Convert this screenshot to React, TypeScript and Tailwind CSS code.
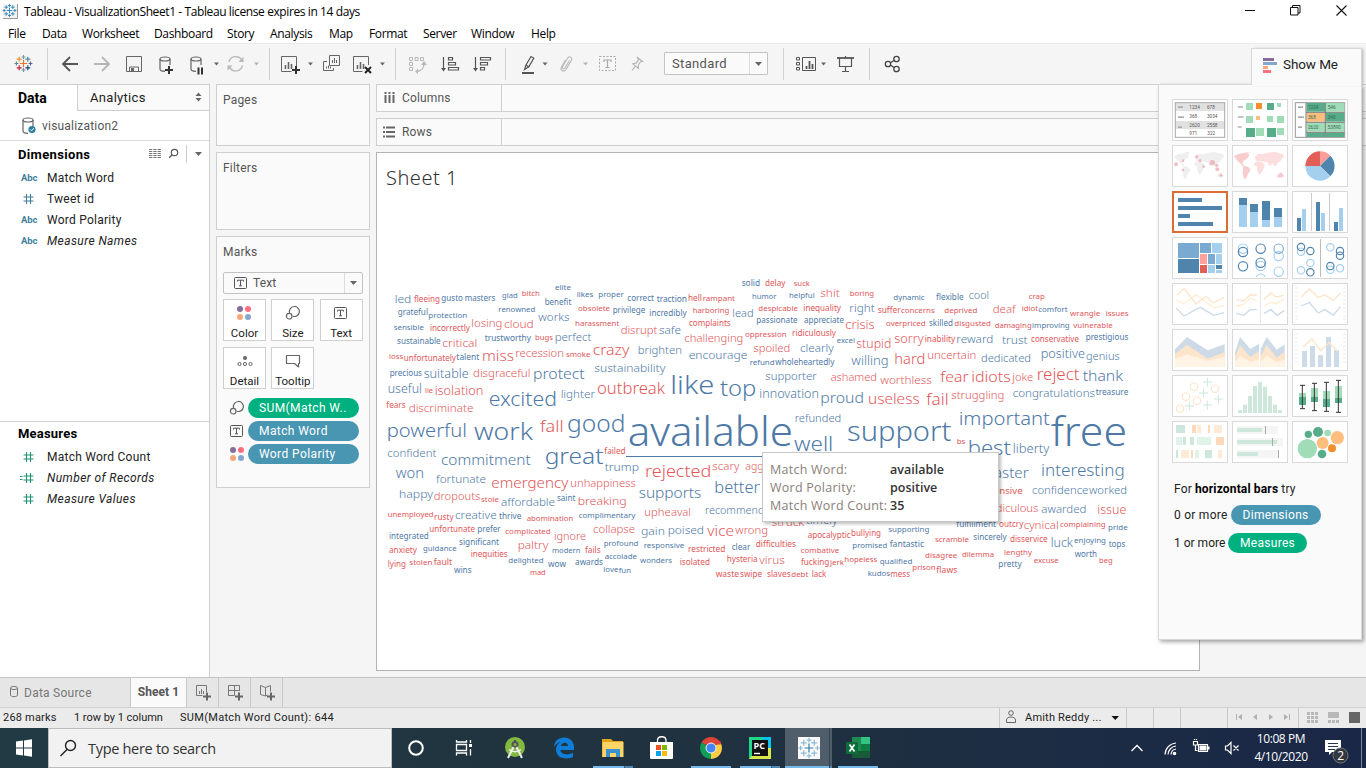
import React from "react";

type Box = { x: number; y: number; w: number; h: number; children?: React.ReactNode };

/* Drawing whose user units are window pixels, cut to the box x/y/w/h. */
const Art = ({ x, y, w, h, children }: Box) => (
  <svg width={w} height={h} viewBox={`${x} ${y} ${w} ${h}`} className="block shrink-0" fill="none">
    {children}
  </svg>
);

/* ---------- word cloud ---------- */

/* Each entry: sign+word, left, baseline, right. "-" is negative polarity. */
const LEFT = `+led 44 99 94|-fleeing 102 95 180|+gusto 184 93 249|+masters 254 92 346|+glad 366 84 413|-bitch 425 78 480|+elite 525 59 573|+likes 590 80 640|+proper 655 80 731|+correct 742 93 822|+traction 830 95 921
+grateful 53 135 144|+protection 145 143 262|+renowned 355 125 466|+benefit 494 104 574|-obsolete 594 122 690|+privilege 698 129 796|+works 475 153 568|-harassment 585 167 718|-disrupt 722 192 832
+sensible 41 179 132|-incorrectly 150 182 270|-losing 274 171 367|-cloud 372 173 461|+sustainable 51 221 182|-critical 187 231 292|+trustworthy 314 213 453|-bugs 465 211 519|+perfect 524 213 634|-crazy 638 256 748|+brighten 773 251 906
-loss 27 267 70|-unfortunately 71 273 228|+talent 229 270 298|-miss 306 272 402|-recession 406 262 552|-smoke 558 261 631|+precious 29 317 126|+suitable 131 325 266|-disgraceful 279 322 451|+protect 459 327 614|+sustainability 643 306 856
+useful 23 370 126|-lie 135 369 159|-isolation 164 376 310|+excited 328 408 528|+lighter 542 385 645|-outbreak 651 371 855|-fears 19 413 77|-discriminate 86 425 280|+powerful 22 501 258|+work 284 510 456|-fall 480 487 551|+good 563 485 733|+available 745 528 1236
+confident 22 562 169|+commitment 183 586 452|+great 496 583 668|-failed 673 551 737|+trump 674 604 777|+won 47 625 132|+fortunate 168 640 318|-emergency 334 653 565|-unhappiness 571 651 767
+happy 57 685 159|-dropouts 161 690 301|-stole 303 695 357|+affordable 363 707 525|+saint 531 694 586|-breaking 593 706 740|-unemployed 23 741 161|-rusty 162 749 221|+creative 225 746 350|+thrive 357 746 424|-abomination 440 752 580|+complimentary 596 743 766
-unfortunate 148 785 285|+prefer 292 785 362|-complicated 376 792 512|-ignore 522 809 618|-collapse 639 789 765|+integrated 27 806 146|+significant 237 825 357|-paltry 413 837 505|+profound 671 827 775|-anxiety 27 849 111|+guidance 129 843 230|-inequities 272 861 383|+modern 516 849 601|-fails 615 849 662
-lying 23 892 78|-stolen 88 885 157|-fault 161 885 216|+delighted 385 879 491|+wow 504 891 558|+awards 585 885 669|+accolade 674 867 771|+wins 222 909 275|-mad 450 915 497|+love 670 906 715|+fun 716 909 753`;

const MIDDLE = `+solid 335 47 390|-delay 405 47 466|-suck 491 47 540|+humor 366 87 439|+helpful 477 84 554|-shit 571 81 629|-boring 659 78 732|-hell 174 93 216|-rampant 218 93 315|+incredibly 58 137 170|-harboring 188 129 298|+lead 307 141 371|-despicable 385 123 504|-inequality 520 123 633|+right 658 126 734|-suffer 743 129 812
-complaints 177 167 302|+passionate 379 159 503|+appreciate 522 159 642|-crisis 646 177 734|+safe 87 192 153|-challenging 163 216 340|-oppression 345 200 470|-ridiculously 486 197 618|+excel 620 218 675|-stupid 679 234 784|+encourage 176 267 352|-spoiled 370 246 481|+clearly 510 246 611
+refund 359 284 434|+wholeheartedly 436 284 613|+willing 664 285 776|+like 123 373 250|+top 272 377 376|+supporter 406 330 560|-ashamed 602 333 741|-worthless 751 341 905|+innovation 388 385 567|+proud 571 399 702|-useless 714 403 869|+refunded 494 456 634|+well 494 543 607|+support 653 512 961
-rejected 47 621 241|-scary 247 601 328|-aggressive 346 599 500|+supports 26 683 214|+better 253 668 390|-upheaval 43 738 183|+recommended 225 732 440|+gain 33 795 105|+poised 113 793 222|-vice 232 797 312|-wrong 316 793 414|-struck 425 768 522|+timely 528 763 622
-apocalyptic 533 803 662|-bullying 663 798 753|+responsive 41 834 163|-restricted 174 845 286|+clear 305 840 361|-difficulties 377 830 498|-combative 512 849 628|+promised 667 834 772|+wonders 30 878 126|-isolated 149 885 240|-hysteria 290 876 383|-virus 388 883 464|-fucking 513 885 598|-jerk 600 885 642|-hopeless 643 876 742|+qualified 749 881 847
-waste 257 921 327|-swipe 330 921 396|-slaves 411 921 482|-debt 484 921 535|-lack 545 921 589|+kudos 713 918 780`;

const RIGHT = `+dynamic 40 89 134|+flexible 168 91 251|+cool 266 87 327|-crap 446 87 495|-concerns 63 129 164|-deprived 193 129 292|-deaf 338 129 407|-idiot 425 123 474|+comfort 475 125 563|-wrangle 570 137 661|-issues 677 137 746|-overpriced 18 167 137|+skilled 147 167 219|-disgusted 223 167 333|-damaging 344 173 455|+improving 456 173 569|-vulnerable 580 173 698
-sorry 43 219 131|-inability 134 215 226|+reward 229 219 340|+trust 366 221 443|-conservative 453 215 597|+prestigious 617 209 745|-hard 43 283 136|-uncertain 142 267 289|+dedicated 303 276 453|+positive 482 264 615|+genius 618 270 719|-fear 181 335 266|-idiots 274 335 392|-joke 397 333 460|-reject 470 329 599|+thank 608 333 729
-fail 139 405 206|-struggling 214 387 373|+congratulations 398 381 645|+treasure 647 374 745|+important 238 465 507|+free 514 527 738|-bs 230 521 256|+best 265 555 390|+liberty 398 549 508|+faster 328 623 446|+interesting 483 618 734|-expensive 293 671 428|+confidence 456 671 625|+worked 627 671 741|-ridiculous 326 725 475|+awarded 484 729 619|-issue 652 731 739
+fulfillment 229 770 348|-outcry 357 770 430|-cynical 431 777 536|-complaining 540 770 677|+pride 684 779 743|+supporting 25 785 148|+fantastic 29 831 132|-scramble 165 815 267|+sincerely 280 810 380|-disservice 390 815 503|+luck 512 831 579|+enjoying 582 819 678|+tops 686 830 736|-disagree 135 863 232|-dilemma 246 861 342|-lengthy 372 855 456|+worth 584 861 651|-beg 657 879 698|-excuse 461 878 536|+pretty 355 891 425|-prison 97 899 167|-flaws 169 908 232|-mess 31 920 90`;

const ADVANCE: Record<string, number> = {
  a: 0.561, b: 0.615, c: 0.48, d: 0.615, e: 0.564, f: 0.344, g: 0.615, h: 0.618, i: 0.258, j: 0.258, k: 0.534, l: 0.258, m: 0.935,
  n: 0.618, o: 0.605, p: 0.615, q: 0.615, r: 0.413, s: 0.479, t: 0.361, u: 0.618, v: 0.508, w: 0.786, x: 0.529, y: 0.51, z: 0.47,
};

const parse = (src: string, dx: number) =>
  src.split(/[|\n]/).map((entry) => {
    const [word, x0, y, x1] = entry.split(" ");
    const text = word.slice(1);
    const width = Number(x1) - Number(x0);
    const em = [...text].reduce((sum, ch) => sum + ADVANCE[ch], 0);
    return { text, x: Number(x0) + dx, y: Number(y), width, size: width / em, positive: word[0] === "+" };
  });

const WORDS = [...parse(LEFT, 0), ...parse(MIDDLE, 750), ...parse(RIGHT, 1500)];

const WordCloud = () => (
  <svg width="778" height="320" viewBox="0 0 2334 960" className="block" fontFamily="'Noto Sans', sans-serif">
    {WORDS.map((w) => (
      <text
        key={w.text}
        x={w.x - (w.size > 50 ? 2 : 0)}
        y={w.y}
        fontSize={w.size}
        fontWeight={w.size < 29 ? 400 : 300}
        textLength={w.width + (w.size > 50 ? 5 : 0)}
        lengthAdjust="spacingAndGlyphs"
        fill={w.positive ? "#4e79a7" : "#e15759"}
      >
        {w.text}
      </text>
    ))}
    <rect x="738" y="558" width="420" height="3" fill="#4e79a7" />
  </svg>
);

/* ---------- icons ---------- */

const Caret = ({ x, y, c = "#666" }: { x: number; y: number; c?: string }) => (
  <path d={`M${x - 2.5} ${y - 1.5}h5l-2.5 3z`} fill={c} />
);

const Plus = ({ x, y, c = "#333", s = 4 }: { x: number; y: number; c?: string; s?: number }) => (
  <path d={`M${x - s} ${y}h${2 * s}M${x} ${y - s}v${2 * s}`} stroke={c} strokeWidth="2" />
);

const CROSSES: [number, number, number, string][] = [
  [0, 0, 3.4, "#e8762c"], [0, -6, 1.8, "#7199a6"], [0, 6, 1.8, "#7199a6"], [-6.5, 0, 1.8, "#5b879b"], [6.5, 0, 1.8, "#5b6591"],
  [-4, -4, 2.3, "#eb912c"], [4, -4, 2.3, "#59879b"], [-4, 4, 2.3, "#c72035"], [4, 4, 2.3, "#1f447e"],
];
const Sparkle = ({ x, y, k = 1, mono, pale }: { x: number; y: number; k?: number; mono?: string; pale?: string }) => (
  <g strokeWidth={pale ? 1.2 : 1.1 * k}>
    {CROSSES.map(([a, b, s, c], i) => (
      <path key={i} stroke={(i > 0 && pale) || mono || c} d={`M${x + (a - s) * k} ${y + b * k}h${2 * s * k}M${x + a * k} ${y + (b - s) * k}v${2 * s * k}`} />
    ))}
  </g>
);

const Cylinder = ({ x, y, w = 10, h = 14 }: { x: number; y: number; w?: number; h?: number }) => (
  <g stroke="#666" strokeWidth="1.2">
    <ellipse cx={x + w / 2} cy={y + 2} rx={w / 2} ry="2" />
    <path d={`M${x} ${y + 2}v${h - 4}c0 1.6 3 2.3 ${w / 2} 2.3M${x + w} ${y + 2}v${h - 8}`} />
  </g>
);

const TextGlyph = ({ x, y, w = 12, h = 11 }: { x: number; y: number; w?: number; h?: number }) => (
  <g stroke="#555">
    <rect x={x + 0.5} y={y + 0.5} width={w} height={h} rx="1" />
    <path d={`M${x + 3.5} ${y + 4.5}v-1.3h6v1.3M${x + 6.5} ${y + 3.2}v5.6M${x + 5} ${y + 8.8}h3`} />
  </g>
);

const SizeGlyph = ({ x, y }: { x: number; y: number }) => (
  <g stroke="#666" strokeWidth="1.2">
    <path d={`M${x + 3.6} ${y + 6.8}A5 5 0 1 1 ${x + 6.8} ${y + 10.2}`} />
    <circle cx={x + 3.2} cy={y + 10.2} r="2.8" />
  </g>
);

const ColorDots = ({ x, y }: { x: number; y: number }) => (
  <g>
    <circle cx={x + 3} cy={y + 3} r="3" fill="#866e98" />
    <circle cx={x + 11} cy={y + 3} r="3" fill="#ff6f80" />
    <circle cx={x + 3} cy={y + 11} r="3" fill="#f5a77b" />
    <circle cx={x + 11} cy={y + 11} r="3" fill="#84a7d0" />
  </g>
);

const Sep = () => <div className="my-1 w-px shrink-0 bg-[#cfcfcf]" />;

/* ---------- window chrome ---------- */

const TitleBar = () => (
  <div className="flex h-[22px] shrink-0 items-center bg-white">
    <Art x={0} y={0} w={24} h={22}>
      <rect x="3" y="4" width="14" height="14" fill="#f3f3f3" />
      <path d="M17.5 4v14.5H3" stroke="#999" />
      <Sparkle x={9.5} y={10.5} k={0.83} mono="#2e86b8" />
    </Art>
    <span className="grow whitespace-nowrap pt-px text-[12px] tracking-[-0.4px] text-black">
      Tableau - VisualizationSheet1 - Tableau license expires in 14 days
    </span>
    <Art x={1236} y={0} w={130} h={22}>
      <path d="M1245 10.5h10" stroke="#111" />
      <path d="M1290.500 7.500h7.500v7.500h-7.500zM1292.500 7.500v-2h7.500v7.500h-2" stroke="#111" />
      <path d="M1336.500 5.500l10 10m0-10l-10 10" stroke="#111" strokeWidth="1.1" />
    </Art>
  </div>
);

const MENU = [
  ["File", "w-[34px]"], ["Data", "w-[40px]"], ["Worksheet", "w-[72px]"], ["Dashboard", "w-[73px]"], ["Story", "w-[43px]"], ["Analysis", "w-[59px]"],
  ["Map", "w-[40px]"], ["Format", "w-[54px]"], ["Server", "w-[48px]"], ["Window", "w-[60px]"], ["Help", "w-[40px]"],
];
const MenuBar = () => (
  <div className="flex h-[21px] shrink-0 items-center bg-white pb-px pl-2 pt-1 text-[12px] tracking-[-0.35px] text-black">
    {MENU.map(([m, w]) => (
      <span key={m} className={`${w} shrink-0`}>{m}</span>
    ))}
  </div>
);

const Bars = ({ x, y }: { x: number; y: number }) => (
  <path d={`M${x} ${y}v-4M${x + 3} ${y}v-7M${x + 6} ${y}v-5`} stroke="#666" strokeWidth="1.6" />
);

const Toolbar = () => (
  <div className="flex h-[41px] shrink-0 border-t border-[#ececec] bg-[#f5f5f5]">
    <Art x={0} y={44} w={47} h={40}>
      <Sparkle x={23.500} y={63.500} k={1.08} />
    </Art>
    <Sep />
    <Art x={48} y={44} w={221} h={40}>
      <path d="M63 64h15M70 57l-7 7 7 7" stroke="#555" strokeWidth="1.800" />
      <path d="M94 64h15M102 57l7 7-7 7" stroke="#b5b5b5" strokeWidth="1.800" />
      <path d="M126.500 56.500h15v15h-15z" stroke="#666" />
      <path d="M129.500 71v-4h9v4" stroke="#666" />
      <path d="M131 68h3v3h-3z" fill="#666" />
      <Cylinder x={160} y={57} />
      <Plus x={169} y={70} />
      <Cylinder x={191} y={57} />
      <path d="M198.500 67.500v7M202 67.500v7" stroke="#333" strokeWidth="2" />
      <Caret x={216.500} y={64} />
      <path d="M229 62a7 7 0 0 1 12.500-2.500M242.500 65.500a7 7 0 0 1-12.500 2.500" stroke="#b8b8b8" strokeWidth="1.300" />
      <path d="M243.500 57v5h-5zM227.500 70.500v-5h5z" fill="#b8b8b8" />
      <Caret x={256.500} y={64} c="#b5b5b5" />
    </Art>
    <Sep />
    <Art x={270} y={44} w={125} h={40}>
      <path d="M296.500 66V56.500h-15v15h10" stroke="#666" />
      <Bars x={285.500} y={69} />
      <Plus x={296} y={70} />
      <Caret x={310.500} y={64} />
      <path d="M329.500 55.500h10v10h-10zM327 61.500h-3.500v9h10V68" stroke="#666" />
      <path d="M332.500 63v-3M334.500 63v-5M336.500 63v-3M326.500 68.500v-2M328.500 68.500v-3M330.500 68.500v-2" stroke="#666" />
      <path d="M368.500 65V56.500h-15v15h9" stroke="#666" />
      <Bars x={357.500} y={69} />
      <path d="M365 67l6 6m0-6l-6 6" stroke="#222" strokeWidth="2" />
      <Caret x={382.500} y={64} />
    </Art>
    <Sep />
    <Art x={396} y={44} w={109} h={40}>
      <g stroke="#b8b8b8">
        <path d="M409.500 57.500h3v3h-3zM415 57.500h3v3h-3zM420.500 57.500h3v3h-3zM409.500 62.500h3v3h-3zM409.500 67.500h3v3h-3z" />
        <path d="M424 64c0 4-3 7-7 7.500" strokeWidth="1.300" />
      </g>
      <path d="M421 65l3-4 3 4zM418 68.500l-3 3 3 2.500z" fill="#b8b8b8" />
      <g stroke="#555" strokeWidth="1.200">
        <path d="M443.500 57v13M475.500 57v13" />
        <path d="M448.500 57.500h4v2.500h-4zM448.500 62.500h7v2.500h-7zM448.500 67.500h10v2.500h-10zM480.500 57.500h10v2.500h-10zM480.500 62.500h7v2.500h-7zM480.500 67.500h4v2.500h-4z" />
      </g>
      <path d="M441 68h5l-2.500 3.500zM473 68h5l-2.500 3.500z" fill="#555" />
    </Art>
    <Sep />
    <Art x={506} y={44} w={158} h={40}>
      <path d="M522 73h12" stroke="#555" strokeWidth="2" />
      <path d="M526 65l5-8.500 2.800 1.600-5 8.700zM526 65l-1.500 4.500 4.300-2.700" stroke="#555" strokeWidth="1.200" />
      <Caret x={545} y={64} />
      <path d="M569.500 60.500l-4.500 7.500c-1 1.700-3.500.5-2.500-1.300l5-8.500c1.500-2.500 5.500-.6 4 2.100l-5.500 9.200c-2 3-6.500 1-4.500-2.500l4-7" stroke="#bbb" strokeWidth="1.200" />
      <Caret x={585.500} y={64} c="#b5b5b5" />
      <rect x="599.500" y="56.500" width="16" height="14" stroke="#aaa" strokeDasharray="2 1.500" />
      <path d="M604 62v-2h7v2M607.500 60v7.500M605.500 67.500h4" stroke="#aaa" strokeWidth="1.200" />
      <path d="M637 57l5.500 4.500-2 .2-2.300 3.500.3 3.300-5.600-4.600 3.200-.7 2.500-3.500zM635.500 66l-3.500 4.500" stroke="#b5b5b5" strokeWidth="1.200" />
    </Art>
    <div className="mt-[8px] flex h-[23px] w-[104px] shrink-0 rounded-[1px] border border-[#c3c3c3] bg-[#fafafa]">
      <span className="w-[84px] pl-[7px] text-[13px] leading-[21px] tracking-[0.35px] text-[#555]">Standard</span>
      <div className="flex w-[18px] border-l border-[#dcdcdc]">
        <Art x={0} y={0} w={17} h={21}>
          <path d="M5 9h7l-3.500 4z" fill="#666" />
        </Art>
      </div>
    </div>
    <Art x={768} y={44} w={15} h={40} />
    <Sep />
    <Art x={784} y={44} w={85} h={40}>
      <path d="M796.500 57.500h3v2.500h-3zM796.500 62.500h3v2.500h-3zM796.500 67.500h3v2.500h-3zM802.500 57.500h13v13h-13z" stroke="#555" />
      <path d="M806.500 69v-3M809.500 69v-8M812.500 69v-5" stroke="#555" strokeWidth="1.800" />
      <Caret x={823.500} y={64} />
      <path d="M837 58h17" stroke="#555" strokeWidth="1.800" />
      <path d="M839.500 58v8.500h12V58M845.500 56v2M845.500 67v4.500M842 71.500h7" stroke="#555" strokeWidth="1.200" />
    </Art>
    <Sep />
    <Art x={870} y={44} w={40} h={40}>
      <g stroke="#444" strokeWidth="1.300">
        <circle cx="888" cy="64" r="2.700" />
        <circle cx="896.500" cy="59" r="2.700" />
        <circle cx="896.500" cy="69" r="2.700" />
        <path d="M890.500 62.700l3.500-2.200M890.500 65.300l3.500 2.200" />
      </g>
    </Art>
  </div>
);

/* ---------- data pane ---------- */

const AbcIcon = () => <span className="w-[27px] pl-px pt-px text-[9.500px] font-bold tracking-[-0.1px] text-[#3f7f9c]">Abc</span>;
const HashIcon = ({ eq, green }: { eq?: boolean; green?: boolean }) => (
  <span className="w-[27px]">
    <Art x={0} y={0} w={20} h={14}>
      <path d="M6.500 2v10M10.500 2v10M3.500 5h10M3.500 9h10" stroke={green ? "#1f9474" : "#3f7f9c"} strokeWidth="1.100" />
      {eq && <path d="M0 5.500h2.500M0 8.500h2.500" stroke="#1f9474" />}
    </Art>
  </span>
);

const Field = ({ icon, name, italic }: { icon: React.ReactNode; name: string; italic?: boolean }) => (
  <div className="flex h-[21px] items-center pl-5">
    {icon}
    <span className={`whitespace-nowrap pt-px text-[12px] text-[#222] ${italic ? "italic tracking-[0.42px]" : "tracking-[0.25px]"}`}>{name}</span>
  </div>
);

const DataPane = () => (
  <div className="flex h-full w-[210px] shrink-0 flex-col border-r border-t border-[#cfcfcf] bg-white">
    <div className="flex h-[26px] shrink-0">
      <div className="w-[77px] pl-[18px] text-[14px] font-bold leading-[26px] text-black">Data</div>
      <div className="flex grow border-b border-l border-[#cfcfcf] bg-[#fafafa]">
        <span className="w-[114px] pl-3 text-[13px] leading-[25px] tracking-[0.3px] text-[#222]">Analytics</span>
        <Art x={192} y={85} w={17} h={25}>
          <path d="M195.500 96h6l-3-3.500zM195.500 98h6l-3 3.500z" fill="#666" />
        </Art>
      </div>
    </div>
    <div className="flex h-[30px] shrink-0 items-center border-b border-[#dcdcdc]">
      <Art x={0} y={111} w={42} h={29}>
        <Cylinder x={23} y={118} w={10} h={15} />
        <circle cx="32" cy="129.500" r="3.600" fill="#2e7f9f" />
        <path d="M30.300 129.500l1.300 1.300 2.200-2.600" stroke="#fff" />
      </Art>
      <span className="text-[12px] tracking-[0.2px] text-[#555]">visualization2</span>
    </div>
    <div className="flex h-[26px] shrink-0 items-center">
      <span className="w-[148px] pl-[18px] pt-px text-[13px] font-bold tracking-[0.35px] text-black">Dimensions</span>
      <Art x={148} y={141} w={61} h={26}>
        <path d="M149 149.500h12M149 151.500h12M149 153.500h12M149 155.500h12M149 157.500h12" stroke="#777" strokeDasharray="3.300 1" />
        <circle cx="174.500" cy="152.500" r="3.200" stroke="#555" strokeWidth="1.200" />
        <path d="M172.200 154.800l-3 3" stroke="#555" strokeWidth="1.400" />
        <path d="M186.500 145v18" stroke="#ccc" />
        <path d="M195 152h7l-3.500 4z" fill="#666" />
      </Art>
    </div>
    <Field icon={<AbcIcon />} name="Match Word" />
    <Field icon={<HashIcon />} name="Tweet id" />
    <Field icon={<AbcIcon />} name="Word Polarity" />
    <Field icon={<AbcIcon />} name="Measure Names" italic />
    <div className="mt-[170px] flex h-[25px] shrink-0 items-center border-t border-[#cfcfcf] pl-[18px] text-[13px] font-bold tracking-[0.2px] text-black">
      Measures
    </div>
    <Field icon={<HashIcon green />} name="Match Word Count" />
    <Field icon={<HashIcon green eq />} name="Number of Records" italic />
    <Field icon={<HashIcon green />} name="Measure Values" italic />
  </div>
);

/* ---------- cards ---------- */

const Card = ({ title, size, children }: { title: string; size: string; children?: React.ReactNode }) => (
  <div className={`${size} shrink-0 border border-[#cfcfcf] bg-[#fafafa] px-[6px] pt-[6px]`}>
    <div className="text-[12px] leading-[18px] tracking-[0.2px] text-[#555]">{title}</div>
    {children}
  </div>
);

const MarkButton = ({ label, children }: { label: string; children: React.ReactNode }) => (
  <div className="flex h-[42px] w-[43px] flex-col items-center border border-[#cfcfcf] bg-white">
    <Art x={0} y={0} w={30} h={24}>{children}</Art>
    <span className="pt-px text-[11.500px] leading-[16px] tracking-[0px] text-[#222]">{label}</span>
  </div>
);

const Pill = ({ label, tone, children }: { label: string; tone: string; children: React.ReactNode }) => (
  <div className="flex h-[20px] items-center">
    <Art x={0} y={0} w={25} h={20}>{children}</Art>
    <span className={`${tone} h-[20px] w-[111px] whitespace-nowrap rounded-full pl-[11px] text-[12px] leading-[20px] tracking-[0.4px] text-white`}>{label}</span>
  </div>
);

const Cards = () => (
  <div className="flex w-[154px] shrink-0 flex-col gap-[6px]">
    <Card title="Pages" size="h-[62px]" />
    <Card title="Filters" size="h-[78px]" />
    <Card title="Marks" size="h-[252px]">
      <div className="mt-[11px] flex h-[22px] w-[140px] rounded-[2px] border border-[#c3c3c3] bg-[#fafafa]">
        <Art x={0} y={0} w={29} h={20}>
          <TextGlyph x={10} y={4} />
        </Art>
        <span className="w-[91px] text-[12px] leading-[20px] tracking-[0.1px] text-[#555]">Text</span>
        <div className="border-l border-[#dcdcdc]">
          <Art x={0} y={0} w={17} h={20}>
            <path d="M5 8h7l-3.500 4z" fill="#666" />
          </Art>
        </div>
      </div>
      <div className="mt-[5px] grid w-[140px] grid-cols-3 gap-x-[5px] gap-y-[6px]">
        <MarkButton label="Color"><ColorDots x={7} y={6} /></MarkButton>
        <MarkButton label="Size"><SizeGlyph x={8} y={6} /></MarkButton>
        <MarkButton label="Text"><TextGlyph x={8} y={7} /></MarkButton>
        <MarkButton label="Detail">
          <circle cx="15" cy="10" r="2" fill="#666" />
          <g stroke="#666"><circle cx="9.500" cy="16" r="1.600" /><circle cx="15" cy="16" r="1.600" /><circle cx="20.500" cy="16" r="1.600" /></g>
        </MarkButton>
        <MarkButton label="Tooltip">
          <path d="M8.500 7.500h13v8h-1v3.500l-4-3.500h-8z" stroke="#666" strokeWidth="1.200" strokeLinejoin="round" />
        </MarkButton>
      </div>
      <div className="mt-[9px] flex flex-col gap-[3px]">
        <Pill label="SUM(Match W.." tone="bg-[#00b180]"><SizeGlyph x={7} y={3} /></Pill>
        <Pill label="Match Word" tone="bg-[#4996b2]"><TextGlyph x={7} y={4} /></Pill>
        <Pill label="Word Polarity" tone="bg-[#4996b2]"><ColorDots x={7} y={3} /></Pill>
      </div>
    </Card>
  </div>
);

/* ---------- sheet ---------- */

const Shelf = ({ label, children }: { label: string; children: React.ReactNode }) => (
  <div className="flex h-[28px] shrink-0 border border-r-0 border-[#cfcfcf] bg-[#fafafa]">
    <div className="flex w-[125px] items-center border-r border-[#cfcfcf]">
      <Art x={0} y={0} w={25} h={26}>{children}</Art>
      <span className="text-[12px] tracking-[0.15px] text-[#555]">{label}</span>
    </div>
  </div>
);

const TIP = [["Match Word:", "available"], ["Word Polarity:", "positive"], ["Match Word Count:", "35"]];

const Sheet = () => (
  <div className="flex grow flex-col gap-[6px]">
    <Shelf label="Columns">
      <path d="M8.500 7v2M12.500 7v2M16.500 7v2M8.500 10v8M12.500 10v8M16.500 10v8" stroke="#666" strokeWidth="2" />
    </Shelf>
    <Shelf label="Rows">
      <path d="M6 8.500h2M6 13h2M6 17.500h2M9 8.500h9M9 13h9M9 17.500h9" stroke="#666" strokeWidth="2" />
    </Shelf>
    <div className="relative h-[519px] w-[824px] shrink-0 border border-[#b4b4b4] bg-white">
      <h1 className="pl-[9px] pt-[12px] text-[20px] font-light leading-[26px] tracking-[0.5px] text-[#333] [font-family:'Noto_Sans',sans-serif]">Sheet 1</h1>
      <div className="pl-[3px] pt-[79px]">
        <WordCloud />
      </div>
      <div className="absolute left-[385px] top-[299px] flex h-[70px] w-[237px] flex-col border border-[#c8c8c8] bg-white pl-[7px] pt-[8px] text-[12.500px] leading-[18px] [font-family:'Open_Sans',sans-serif] shadow-[2px_2px_3px_rgba(0,0,0,0.25)]">
        {TIP.map(([k, v]) => (
          <div key={k} className="flex h-[18px]">
            <span className="w-[120px] whitespace-nowrap tracking-[0.25px] text-[#8a8078]">{k}</span>
            <span className="font-semibold tracking-[0px] text-[#333]">{v}</span>
          </div>
        ))}
      </div>
    </div>
  </div>
);

/* ---------- show me ---------- */

const B1 = "#4f84ad";
const B2 = "#a5cfef";
const G1 = "#57ac8a";
const G2 = "#a0dcb8";

const R = ({ d, f }: { d: number[][]; f: string }) => (
  <>
    {d.map(([x, y, w, h], i) => (
      <rect key={i} x={x} y={y} width={w} height={h} fill={f} />
    ))}
  </>
);
const C = ({ d, s }: { d: number[][]; s: string }) => (
  <>
    {d.map(([x, y, r], i) => (
      <circle key={i} cx={x} cy={y} r={r} stroke={s} strokeWidth="3.500" />
    ))}
  </>
);

const LAND =
  "M6 34l14-7 20-3 12 6-6 10-10 6-6 8 8 10-6-2-10-10-8-8-4-6zM36 22l18-2-6 8zM34 62l14 4 8 8-8 12-6 14-6 2-4-18zM68 36l10-10 12 2 14-4 22-4 28 8 2 8-8 6-4 8-8 4-4 10-6-2-4-8-8 10-8-12-10-2-12-2-10 2zM68 52l18-2 10 6 2 8-8 16-8 10-6-12-2-14-8-4zM138 88l10-6 8 12-10 4-10-2z";

const Line = ({ d, s }: { d: string; s: string }) => <path d={d} stroke={s} strokeWidth="4" />;

const NumberText = ({ rows, light }: { rows: string[][]; light?: boolean }) => (
  <g fontFamily="Roboto, sans-serif" fontSize="14" fill={light ? "#356b57" : "#555"}>
    {rows.map(([a, b], i) => (
      <React.Fragment key={i}>
        <text x="52" y={30 + i * 27}>{a}</text>
        <text x="105" y={30 + i * 27}>{b}</text>
      </React.Fragment>
    ))}
  </g>
);

const O = "#fde5cc";
const O2 = "#fdf0d5";
const BL = "#cddbe8";
const GL = "#cde7db";

const THUMBS: React.ReactNode[] = [
  <>
    <R f="#e1e1e1" d={[[10, 12, 148, 24], [10, 66, 148, 24]]} />
    <rect x="10" y="11" width="148" height="104" stroke="#aaa" strokeWidth="3" />
    <R f="#aaa" d={[[18, 22, 15, 5], [18, 52, 18, 5], [18, 82, 12, 5]]} />
    <NumberText rows={[["1234", "678"], ["368", "3034"], ["2620", "2558"]]} />
    <g fontFamily="Roboto, sans-serif" fontSize="14" fill="#555"><text x="52" y="109">971</text><text x="106" y="109">322</text></g>
  </>,
  <>
    <R f="#aaa" d={[[17, 22, 16, 4], [17, 52, 18, 4], [17, 82, 12, 4]]} />
    <R f={G2} d={[[42, 12, 21, 21], [135, 12, 12, 12], [42, 51, 21, 21], [105, 51, 18, 18], [135, 51, 21, 21], [72, 87, 24, 24], [135, 87, 21, 21]]} />
    <R f={G1} d={[[105, 12, 21, 21], [42, 87, 27, 27], [105, 87, 27, 27]]} />
    <R f="#f28e2b" d={[[72, 12, 18, 18]]} />
    <R f="#ffbe7d" d={[[72, 51, 12, 12]]} />
  </>,
  <>
    <rect x="10" y="11" width="148" height="104" fill="#fff" stroke="#999" strokeWidth="3" />
    <R f={G1} d={[[44, 12, 55, 26], [102, 42, 55, 26], [44, 102, 55, 12], [102, 102, 55, 12]]} />
    <R f={G2} d={[[102, 12, 55, 26], [44, 72, 55, 26], [102, 72, 55, 26]]} />
    <R f="#ffbe7d" d={[[44, 42, 55, 26]]} />
    <path d="M42 12v102M100 12v102M42 40h115M42 70h115M42 100h115" stroke="#777" strokeWidth="3" />
    <R f="#aaa" d={[[18, 22, 15, 5], [18, 52, 18, 5], [18, 82, 12, 5]]} />
    <g fontFamily="Roboto, sans-serif" fontSize="14" fill="#356b57">
      <text x="48" y="30">1234</text><text x="107" y="30">546</text>
      <text x="48" y="61">368</text><text x="107" y="61">340</text>
      <text x="48" y="91">2620</text><text x="107" y="91">53890</text>
    </g>
  </>,
  <>
    <path d={LAND} fill="#efefef" />
    <g fill="#e8a6ad" fillOpacity=".7">
      <circle cx="12" cy="58" r="6" /><circle cx="33" cy="75" r="4" /><circle cx="74" cy="35" r="5" /><circle cx="84" cy="47" r="5" /><circle cx="95" cy="65" r="4" /><circle cx="121" cy="53" r="8" /><circle cx="136" cy="73" r="6" /><circle cx="147" cy="91" r="4" /><circle cx="33" cy="47" r="4" /><circle cx="134" cy="61" r="5" />
    </g>
  </>,
  <>
    <path d={LAND} fill="#fcdede" />
    <path d="M6 34l14-7 20-3 12 6-6 10-10 6-6 8 8 10-6-2-10-10-8-8-4-6zM34 62l14 4 8 8-8 12-6 14-6 2-4-18zM138 88l10-6 8 12-10 4-10-2z" fill="#f7cccc" />
  </>,
  <>
    <path d="M84 63V19A44 44 0 0 1 115 32z" fill="#ff9d9a" />
    <path d="M84 63L115 32A44 44 0 0 1 115 94z" fill={B1} />
    <path d="M84 63L115 94A44 44 0 0 1 40 63z" fill={B2} />
    <path d="M84 63H40A44 44 0 0 1 84 19z" fill="#e15f57" />
  </>,
  <R f={B1} d={[[18, 21, 72, 12], [18, 45, 132, 12], [18, 69, 36, 12], [18, 93, 105, 12]]} />,
  <>
    <R f={B1} d={[[21, 21, 24, 21], [54, 39, 24, 24], [90, 30, 24, 57], [126, 51, 24, 27]]} />
    <R f={B2} d={[[21, 42, 24, 66], [54, 63, 24, 45], [90, 87, 24, 21], [126, 78, 24, 30]]} />
  </>,
  <>
    <R f="#ccc" d={[[57, 3, 3, 120], [111, 3, 3, 120]]} />
    <R f={B1} d={[[15, 81, 12, 42], [72, 33, 12, 90], [126, 93, 12, 30]]} />
    <R f={B2} d={[[30, 54, 12, 69], [87, 66, 12, 57], [141, 51, 12, 72]]} />
  </>,
  <>
    <R f="#7aaad0" d={[[18, 18, 63, 45], [84, 18, 33, 30], [108, 51, 21, 30]]} />
    <R f={B1} d={[[18, 66, 63, 42], [132, 84, 18, 12]]} />
    <R f={B2} d={[[120, 18, 30, 30], [132, 51, 18, 30], [108, 84, 21, 24], [132, 99, 18, 9]]} />
    <R f="#ffa09c" d={[[84, 51, 21, 30]]} />
    <R f="#e15f57" d={[[84, 84, 21, 24]]} />
  </>,
  <>
    <C s={B2} d={[[33, 35, 14], [86, 87, 14], [140, 57, 14], [140, 104, 14], [86, 125, 14]]} />
    <C s={B1} d={[[33, 45, 14], [33, 88, 14], [86, 35, 14], [86, 77, 14]]} />
    <C s="#7eaed2" d={[[140, 35, 14]]} />
  </>,
  <>
    <R f="#bbb" d={[[84, 3, 3, 120]]} />
    <C s={B2} d={[[27, 44, 11], [55, 78, 11], [27, 100, 11], [115, 31, 11], [115, 98, 11], [144, 94, 11]]} />
    <C s={B1} d={[[27, 30, 11], [55, 42, 11], [55, 106, 11], [144, 42, 11], [144, 56, 11], [115, 87, 11]]} />
  </>,
  <>
    <Line s={O2} d="M12 53l24 9 36-27 54 39 30-6" />
    <Line s={O} d="M15 36l21-19 36 46 30-23 21 20 33-17" />
    <Line s={BL} d="M12 75l24 24 48-26 42 24 30-8" />
  </>,
  <>
    <R f="#e8e8e8" d={[[84, 3, 3, 120]]} />
    <Line s={O} d="M12 50l24 4 18-18h20M95 50l22-20 15 12 24-5" />
    <Line s={O2} d="M12 69l24-4 18-20 20 9M95 69l22-11 15 4 24-13" />
    <Line s={BL} d="M12 91l24 6 18-17h20M95 92l22-12 18 17 22-14" />
  </>,
  <>
    <path d="M9 15h9M9 27h9M9 39h9M9 51h9M9 63h9M9 75h9M9 87h9M9 99h9M9 108h9M153 15h9M153 27h9M153 39h9M153 51h9M153 63h9M153 75h9M153 87h9M153 99h9M153 108h9" stroke="#e4e4e4" strokeWidth="2" />
    <Line s={O} d="M27 42l25-24 27 26 19-9 26 18 21-23" />
    <Line s={BL} d="M27 69l25-10 27 31 19-11 26 18 21-27" />
  </>,
  <>
    <path d="M9 61l36-37 62 40 51-18v68H9z" fill={BL} />
    <path d="M9 75l36-28 62 42 51-20v45H9z" fill={O} />
    <path d="M9 90l36-14 62 19 51-12v31H9z" fill="#fef3e4" />
  </>,
  <>
    <path d="M9 70l15-46 31 36 26-16v70H9zM86 60l18-36 30 38 24-16v68H86z" fill={BL} />
    <path d="M9 82l15-34 31 36 26-18v48H9zM86 82l18-34 30 38 24-18v46H86z" fill={O} />
    <path d="M9 98l15-18 31 18 26-6v22H9zM86 98l18-18 30 18 24-6v22H86z" fill="#fef3e4" />
  </>,
  <>
    <path d="M9 15h9M9 27h9M9 39h9M9 51h9M9 63h9M9 75h9M9 87h9M9 99h9M153 15h9M153 27h9M153 39h9M153 51h9M153 63h9M153 75h9M153 87h9M153 99h9" stroke="#e4e4e4" strokeWidth="2" />
    <R f={BL} d={[[30, 66, 15, 48], [54, 51, 15, 63], [78, 78, 15, 36], [102, 24, 15, 90], [126, 63, 15, 51]]} />
    <path d="M33 54l27-24 26 35 25-24 26 26" stroke={O} strokeWidth="4" />
  </>,
  <>
    <C s={O} d={[[66, 35, 11], [129, 41, 11], [42, 65, 11], [75, 77, 11], [24, 101, 11]]} />
    <path d="M93 21h27M106 8v27M81 54h27M94 41v27M126 72h27M139 59v27M39 93h27M52 80v27M93 90h27M106 77v27" stroke={GL} strokeWidth="3" />
  </>,
  <R f={GL} d={[[18, 105, 12, 9], [33, 89, 12, 25], [48, 63, 12, 51], [63, 33, 12, 81], [78, 21, 12, 93], [93, 35, 12, 79], [108, 63, 12, 51], [123, 89, 12, 25], [138, 105, 12, 9]]} />,
  <>
    <R f={G2} d={[[21, 54, 21, 20], [57, 39, 21, 26], [93, 48, 21, 24], [129, 33, 21, 36]]} />
    <R f={G1} d={[[21, 66, 21, 24], [57, 65, 21, 16], [93, 72, 21, 24], [129, 69, 21, 15]]} />
    <path d="M31 30v71M24 31h15M24 101h15M67 25v82M60 25h15M60 107h15M103 22v87M96 22h15M96 109h15M139 16v96M132 16h15M132 112h15" stroke="#333" strokeWidth="3" />
  </>,
  <>
    <R f={GL} d={[[12, 12, 27, 24], [33, 48, 9, 24], [54, 48, 12, 24], [12, 87, 6, 24], [99, 87, 21, 24]]} />
    <R f="#fcd9ba" d={[[60, 12, 12, 24], [108, 12, 6, 24], [132, 48, 24, 24], [57, 87, 6, 24]]} />
    <R f="#feebd7" d={[[75, 12, 12, 24], [126, 12, 24, 24], [27, 87, 24, 24], [138, 87, 12, 24]]} />
    <R f="#e0f3e8" d={[[12, 48, 18, 24], [75, 48, 42, 24], [69, 87, 12, 24]]} />
  </>,
  <>
    <R f="#f5f5f5" d={[[15, 15, 123, 24], [15, 51, 138, 24], [15, 87, 123, 24]]} />
    <R f={GL} d={[[15, 21, 75, 12], [15, 57, 120, 12], [15, 93, 63, 12]]} />
    <R f="#aaa" d={[[99, 15, 3, 24], [120, 51, 3, 24], [138, 87, 3, 24]]} />
  </>,
  <>
    <g fill={G1}><circle cx="49" cy="40" r="11" /><circle cx="78" cy="33" r="15" /><circle cx="90" cy="99" r="13" /></g>
    <g fill={G2}><circle cx="46" cy="83" r="29" /><circle cx="107" cy="36" r="10" /></g>
    <g fill="#ffbe7d"><circle cx="92" cy="66" r="18" /><circle cx="136" cy="50" r="20" /></g>
    <circle cx="120" cy="82" r="12" fill="#f28e2b" />
  </>,
];

const ShowMe = () => (
  <div className="absolute left-[1158px] top-[48px] w-[204px]">
    <div className="absolute bottom-0 left-0 h-[556px] w-[204px] shadow-[2px_2px_4px_rgba(0,0,0,0.35)]" />
    <div className="relative ml-[93px] flex h-[37px] w-[111px] items-center border border-b-0 border-[#d8d8d8] bg-[#fafafa] shadow-[2px_0_3px_-1px_rgba(0,0,0,0.3)]">
      <Art x={1252} y={48} w={31} h={35}>
        <path d="M1263 57.500h11" stroke="#866e98" strokeWidth="3" />
        <path d="M1263 61.500h14" stroke="#84a7d0" strokeWidth="3" />
        <path d="M1263 65.500h5" stroke="#f5a77b" strokeWidth="3" />
        <path d="M1263 69.500h8" stroke="#ff6f80" strokeWidth="3" />
      </Art>
      <span className="pb-[6px] text-[13.500px] tracking-[-0.1px] text-[#222]">Show Me</span>
    </div>
    <div className="-mt-px h-[556px] border border-[#d8d8d8] bg-[#fafafa] pl-[13px] pt-[14px]">
      <div className="grid w-[176px] grid-cols-3 gap-x-[4px] gap-y-[4px]">
        {THUMBS.map((t, i) => (
          <div key={i} className={`flex h-[42px] w-[56px] items-center justify-center bg-white ${i === 6 ? "border-2 border-[#dd6b38]" : "border border-[#d9d9d9]"}`}>
            <svg width="56" height="42" viewBox="0 0 168 126" className="shrink-0 [clip-path:inset(2px)]" fill="none">{t}</svg>
          </div>
        ))}
      </div>
      <div className="pl-[2px] pt-[16px] text-[12px] leading-[20px] text-[#222]">
        <div className="tracking-[0.15px]">For <b className="text-black">horizontal bars</b> try</div>
        <div className="mt-[6px] flex gap-[3px] whitespace-nowrap">
          <span className="tracking-[0.25px]">0 or more</span>
          <span className="w-[90px] rounded-full bg-[#4996b2] text-center tracking-[0.3px] text-white">Dimensions</span>
        </div>
        <div className="mt-[8px] flex gap-[3px] whitespace-nowrap">
          <span className="w-[51px] tracking-[0px]">1 or more</span>
          <span className="w-[79px] rounded-full bg-[#00b180] text-center tracking-[0.3px] text-white">Measures</span>
        </div>
      </div>
    </div>
    <div className="absolute left-[94px] top-[35px] h-[3px] w-[109px] bg-[#fafafa]" />
  </div>
);

/* ---------- bottom bars ---------- */

const SheetTabs = () => (
  <div className="flex h-[30px] shrink-0 border-t border-[#c4c4c4] bg-[#e6e6e6]">
    <div className="flex w-[131px] items-center border-r border-[#c8c8c8]">
      <Art x={0} y={678} w={24} h={29}>
        <g stroke="#777"><ellipse cx="14" cy="688" rx="3.500" ry="1.600" /><path d="M10.500 688v7c0 2.200 7 2.200 7 0v-7" /></g>
      </Art>
      <span className="text-[12px] tracking-[0.25px] text-[#777]">Data Source</span>
    </div>
    <div className="w-[56px] border-r border-[#c8c8c8] bg-[#fafafa] text-center text-[12px] font-bold leading-[29px] tracking-[0.1px] text-[#555]">Sheet 1</div>
    <div className="flex w-[32px] border-r border-[#c8c8c8]">
      <Art x={187} y={678} w={31} h={29}>
        <path d="M206.500 692v-6.500h-10v10h6" stroke="#777" />
        <path d="M199.500 694v-3M201.500 694v-5M203.500 694v-3" stroke="#777" />
        <Plus x={207} y={696.500} c="#666" />
      </Art>
    </div>
    <div className="flex w-[32px] border-r border-[#c8c8c8]">
      <Art x={219} y={678} w={31} h={29}>
        <path d="M239.500 691v-5.500h-11v10h6M228.500 690.500h11M234.500 685.500v10" stroke="#777" />
        <Plus x={239} y={696.500} c="#666" />
      </Art>
    </div>
    <div className="flex w-[32px] border-r border-[#c8c8c8]">
      <Art x={251} y={678} w={31} h={29}>
        <path d="M265.500 696v-8.500l-5-2v9l5 1.500 2-1M265.500 687.500l5-2v6" stroke="#777" />
        <Plus x={271} y={696.500} c="#666" />
      </Art>
    </div>
  </div>
);

const StatusBar = () => (
  <div className="flex h-[21px] shrink-0 items-center border-t border-[#cfcfcf] bg-[#ebebeb] text-[11px] text-[#222]">
    <span className="w-[74px] pl-[3px] pt-px tracking-[0.2px]">268 marks</span>
    <span className="w-[106px] pt-px tracking-[-0.02px]">1 row by 1 column</span>
    <span className="w-[819px] pt-px tracking-[0.3px]">SUM(Match Word Count): 644</span>
    <Art x={999} y={708} w={26} h={20}>
      <path d="M999.500 708v20" stroke="#c8c8c8" />
      <circle cx="1011" cy="713" r="2.300" stroke="#666" />
      <path d="M1006.500 722.500v-2.500c0-4 9-4 9 0v2.500z" stroke="#666" />
    </Art>
    <span className="w-[83px] pt-px tracking-[0.2px]">Amith Reddy ...</span>
    <Art x={1108} y={708} w={258} h={20}>
      <path d="M1111.500 716h7.500l-3.750 4z" fill="#111" />
      <path d="M1126.500 708v20M1153.500 708v20M1180.500 708v20M1227.500 708v20M1298.500 708v20" stroke="#c8c8c8" />
      <path d="M1242 714v6l-4-3zM1257 714v6l-4-3zM1269 714v6l4-3zM1284 714v6l4-3z" fill="#b0b0b0" />
      <path d="M1236.500 714v6M1289.500 714v6" stroke="#b0b0b0" />
      <path d="M1307 713.500h11M1307 717.500h11M1307 721.500h11" stroke="#b8b8b8" strokeWidth="3" strokeDasharray="3 1" />
      <path d="M1328 712h11v6h-11z" fill="#b8b8b8" />
      <path d="M1328 721.500h11" stroke="#b8b8b8" strokeWidth="3" strokeDasharray="3 1" />
      <path d="M1349 712h11v11h-11z" fill="#666" />
    </Art>
  </div>
);

const Taskbar = () => (
  <div className="flex h-[40px] shrink-0 bg-linear-to-r from-[#213a43] via-[#20323f] to-[#1a2747] [font-family:'Open_Sans',sans-serif]">
    <Art x={0} y={728} w={48} h={40}>
      <path d="M16 741.500l7-1v7h-7zM24 740.400l8-1.200v8.300h-8zM16 748.500h7v7l-7-1zM24 748.500h8v8.300l-8-1.200z" fill="#fff" />
    </Art>
    <div className="flex w-[344px] items-center border border-[#bdbdbd] bg-[#f2f2f2]">
      <Art x={49} y={729} w={39} h={38}>
        <circle cx="70.500" cy="745.500" r="5" stroke="#222" strokeWidth="1.400" />
        <path d="M67 749.500l-6.500 6.500" stroke="#222" strokeWidth="1.400" />
      </Art>
      <span className="pt-[2px] text-[14.500px] tracking-[-0.3px] text-[#333]">Type here to search</span>
    </div>
    <Art x={392} y={728} w={708} h={40}>
      <circle cx="416" cy="748" r="6.800" stroke="#fff" strokeWidth="2" />
      <g stroke="#fff" strokeWidth="1.300">
        <path d="M456.500 744.500h10v6h-10zM456.500 740v2h10v-2M456.500 755.500v-2.500h10v2.500M470.500 740v3M470.500 749v6.500" />
        <path d="M469 745.500h3" strokeWidth="3" />
      </g>
      <circle cx="515" cy="747" r="10" fill="#83b93f" />
      <circle cx="515" cy="744.500" r="2.500" stroke="#555" strokeWidth="2" />
      <path d="M513.500 747l-5.500 11M516.500 747l5.500 11" stroke="#eee" strokeWidth="2" />
      <path d="M509 749.500c4 3 8 3 12 0" stroke="#eee" strokeWidth="1.500" />
      <path d="M515 740v3" stroke="#555" strokeWidth="2" />
      <path d="M554 747c.5-6 4.500-9.500 10-9.500 6.500 0 10 4.500 10 9.500v3h-13.500c0 4 6.500 6 12.500 2.800v4.200c-8.500 3.500-17 .5-17-7.500 0-4 2-6 5-7.500-2.500.5-5 2-7 5zM561 746h7c0-4.500-6.500-4.500-7 0z" fill="#0f7ed8" />
      <path d="M602 739h9l2 2h10v16h-21z" fill="#e3a21a" />
      <path d="M602.500 742h21v15h-21z" fill="#fdd466" />
      <path d="M606 757v-8h14v8h-4v-4h-6v4z" fill="#3a91d0" />
      <path d="M657.500 743v-2.500c0-5 8.500-5 8.500 0v2.500" stroke="#fff" strokeWidth="1.300" />
      <path d="M650 742h23v15.500c0 1-.5 1.500-1.500 1.500h-20c-1 0-1.500-.5-1.500-1.500z" fill="#fff" />
      <path d="M656 745h5v5h-5z" fill="#f25022" />
      <path d="M662 745h5v5h-5z" fill="#7fba00" />
      <path d="M656 751h5v5h-5z" fill="#00a4ef" />
      <path d="M662 751h5v5h-5z" fill="#ffb900" />
      <path d="M711 748L701.500 742.500A11 11 0 0 1 720.500 742.500z" fill="#db4437" />
      <path d="M711 748L720.500 742.500A11 11 0 0 1 711 759z" fill="#ffcd40" />
      <path d="M711 748v11A11 11 0 0 1 701.500 742.500z" fill="#0f9d58" />
      <path d="M711 743h9.800" stroke="#db4437" strokeWidth="3" />
      <circle cx="711" cy="748" r="5" fill="#4285f4" stroke="#f1f1f1" />
      <path d="M749 737h22v22h-22z" fill="#21d789" />
      <path d="M762 737h9v12l-9 10z" fill="#07c3f2" />
      <path d="M749 759l10-11 12 0v11z" fill="#d8e84a" />
      <path d="M752 740h16v16h-16z" fill="#111" />
      <path d="M754 753.500h6" stroke="#fff" strokeWidth="1.400" />
      <text x="753.500" y="748.500" fill="#fff" fontSize="9" fontWeight="700" fontFamily="'Open Sans', sans-serif">PC</text>
      <path d="M785 728h47v40h-47z" fill="#fff" fillOpacity=".22" />
      <path d="M829.500 728v40" stroke="#22313f" strokeOpacity=".6" />
      <path d="M798 737h22v22h-22z" fill="#fafafa" />
      <Sparkle x={809} y={748} k={1.3} mono="#2f7fb0" pale="#8db9d3" />
      <path d="M852 737h9v21h-9z" fill="#1d8b52" />
      <path d="M861 737h9v7h-9z" fill="#33c481" />
      <path d="M861 744h9v7h-9z" fill="#107c41" />
      <path d="M852 751h18v7h-18z" fill="#185c37" />
      <path d="M846 742h12v12h-12z" fill="#0d6d38" />
      <path d="M849.500 744.500l5 7m0-7l-5 7" stroke="#fff" strokeWidth="1.700" />
      <path d="M593 767h31M691 767h40M740 767h31M785 767h44M838 767h40" stroke="#76b9ed" strokeWidth="2" />
      <path d="M624.500 767h8.500M771.500 767h8.500M830 767h2" stroke="#4f86b3" strokeWidth="2" />
    </Art>
    <Art x={1100} y={728} w={142} h={40}>
      <path d="M1131.500 751l5.500-5.500 5.500 5.500" stroke="#fff" strokeWidth="1.300" />
      <g stroke="#fff" strokeWidth="1.200">
        <path d="M1165 754.500a12 12 0 0 1 11-11.500M1168 754.500a9 9 0 0 1 8-8.500M1171 754.500a6 6 0 0 1 5-5.500" />
        <circle cx="1174.500" cy="753.500" r="1.200" fill="#fff" />
        <path d="M1198.500 744.500h9v7h-9z" />
        <path d="M1193.500 741.500h4v3.500h-4zM1194.500 740v-1M1196.500 740v-1M1195.500 745v5.500h2" />
        <path d="M1225.500 746v4h2l3.500 3.500v-11l-3.500 3.500zM1233.500 745.500l5 5m0-5l-5 5" />
      </g>
      <path d="M1199.500 745.500h7v5h-7zM1208 746.500h1.500v3h-1.500z" fill="#fff" />
    </Art>
    <div className="flex w-[78px] flex-col items-center pt-[2px] text-[12px] leading-[18px] tracking-[-0.4px] text-white">
      <span>10:08 PM</span>
      <span>4/10/2020</span>
    </div>
    <Art x={1320} y={728} w={46} h={40}>
      <path d="M1325 740h16v12h-9l-3 3v-3h-4z" fill="#fff" />
      <path d="M1328 743.500h10M1328 746.500h10M1328 749.500h7" stroke="#26334c" />
      <circle cx="1340.500" cy="755.500" r="7.500" fill="#33373f" stroke="#777" />
      <text x="1337.300" y="760" fill="#fff" fontSize="12" fontFamily="'Open Sans', sans-serif">2</text>
      <path d="M1361.500 728v40" stroke="#7c879a" />
    </Art>
  </div>
);

export default function App() {
  return (
    <div className="relative flex h-[768px] w-[1366px] flex-col overflow-hidden bg-[#f5f5f5] [font-family:Roboto,sans-serif]">
      <div className="flex flex-col [font-family:'Open_Sans',sans-serif]">
        <TitleBar />
        <MenuBar />
      </div>
      <Toolbar />
      <div className="flex h-[593px] shrink-0 gap-[6px]">
        <DataPane />
        <Cards />
        <Sheet />
      </div>
      <SheetTabs />
      <StatusBar />
      <Taskbar />
      <ShowMe />
    </div>
  );
}
